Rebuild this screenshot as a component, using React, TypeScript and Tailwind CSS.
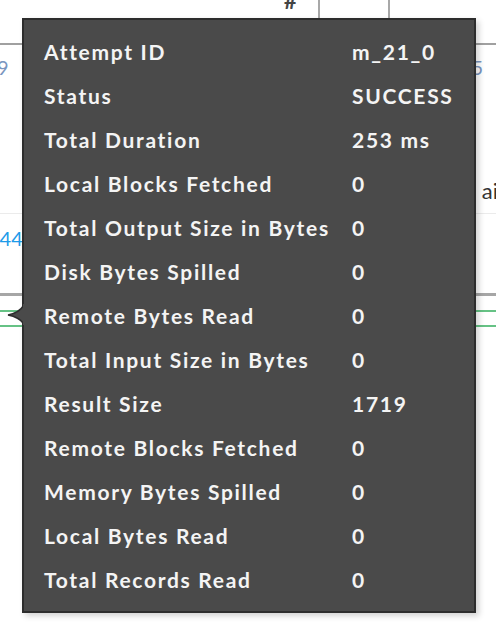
import React from "react";

const rows: [string, string][] = [
  ["Attempt ID", "m_21_0"],
  ["Status", "SUCCESS"],
  ["Total Duration", "253 ms"],
  ["Local Blocks Fetched", "0"],
  ["Total Output Size in Bytes", "0"],
  ["Disk Bytes Spilled", "0"],
  ["Remote Bytes Read", "0"],
  ["Total Input Size in Bytes", "0"],
  ["Result Size", "1719"],
  ["Remote Blocks Fetched", "0"],
  ["Memory Bytes Spilled", "0"],
  ["Local Bytes Read", "0"],
  ["Total Records Read", "0"],
];

const App = () => {
  return (
    <div
      className="relative w-[496px] h-[634px] overflow-hidden bg-white"
      style={{ fontFamily: "Lato, 'Open Sans', sans-serif" }}
    >
      {/* TABLE UNDERNEATH */}
      <div className="flex flex-col">
        <div className="relative h-[45px] border-b-[2px] border-[#a0a0a0] flex">
          <div className="w-[284px]" />
          <div className="w-[34px] -mt-[10px] text-[22px] font-bold text-[#444] leading-none">#</div>
          <div className="w-[70px] border-l-[2px] border-[#a8a8a8]" />
          <div className="flex-1 border-l-[2px] border-[#a8a8a8]" />
        </div>
        <div className="h-[44px] flex justify-between items-center text-[20px] text-[#7a96c0] leading-none">
          <span className="-ml-[3px]">9</span>
          <span className="mr-[13px]">5</span>
        </div>
        <div className="h-[80px]" />
        <div className="h-[44px] flex justify-end items-center text-[22px] text-[#333] leading-none">
          <span className="-mr-[2px]">ai</span>
        </div>
        <div className="h-[1px] bg-[#ebebeb]" />
        <div className="h-[48px] flex items-center text-[20px] text-[#1e9be9] leading-none">
          <span className="-ml-[12px]">144</span>
        </div>
        <div className="h-[31px]" />
        <div className="h-[3px] bg-[#a6a6a6]" />
        <div className="h-[14px]" />
        <div className="h-[2px] bg-[#66c285]" />
        <div className="h-[13px]" />
        <div className="h-[2px] bg-[#66c285]" />
      </div>

      {/* TOOLTIP */}
      <div className="absolute left-[22px] top-[18px] w-[454px] h-[595px] bg-[#4a4a4a] border-[2px] border-[#2d2d2d] shadow-[3px_3px_6px_rgba(0,0,0,0.18)]">
        <div className="pt-[10px] pl-[20px] flex flex-col">
          {rows.map(([label, value]) => (
            <div key={label} className="h-[44px] flex items-center text-[21px] font-bold text-[#f4f4f4] tracking-[1.7px]">
              <span className="w-[308px] whitespace-nowrap">{label}</span>
              <span className="whitespace-nowrap">{value}</span>
            </div>
          ))}
        </div>
      </div>

      {/* ARROW */}
      <svg className="absolute left-[7px] top-[304px]" width="18" height="21" viewBox="0 0 18 21">
        <path d="M17 1 Q12 9 1 11 Q12 13 17 20 Z" fill="#4a4a4a" stroke="#2d2d2d" strokeWidth="1.5" />
        <rect x="16" y="0" width="2" height="21" fill="#4a4a4a" />
      </svg>
    </div>
  );
};

export default App;
